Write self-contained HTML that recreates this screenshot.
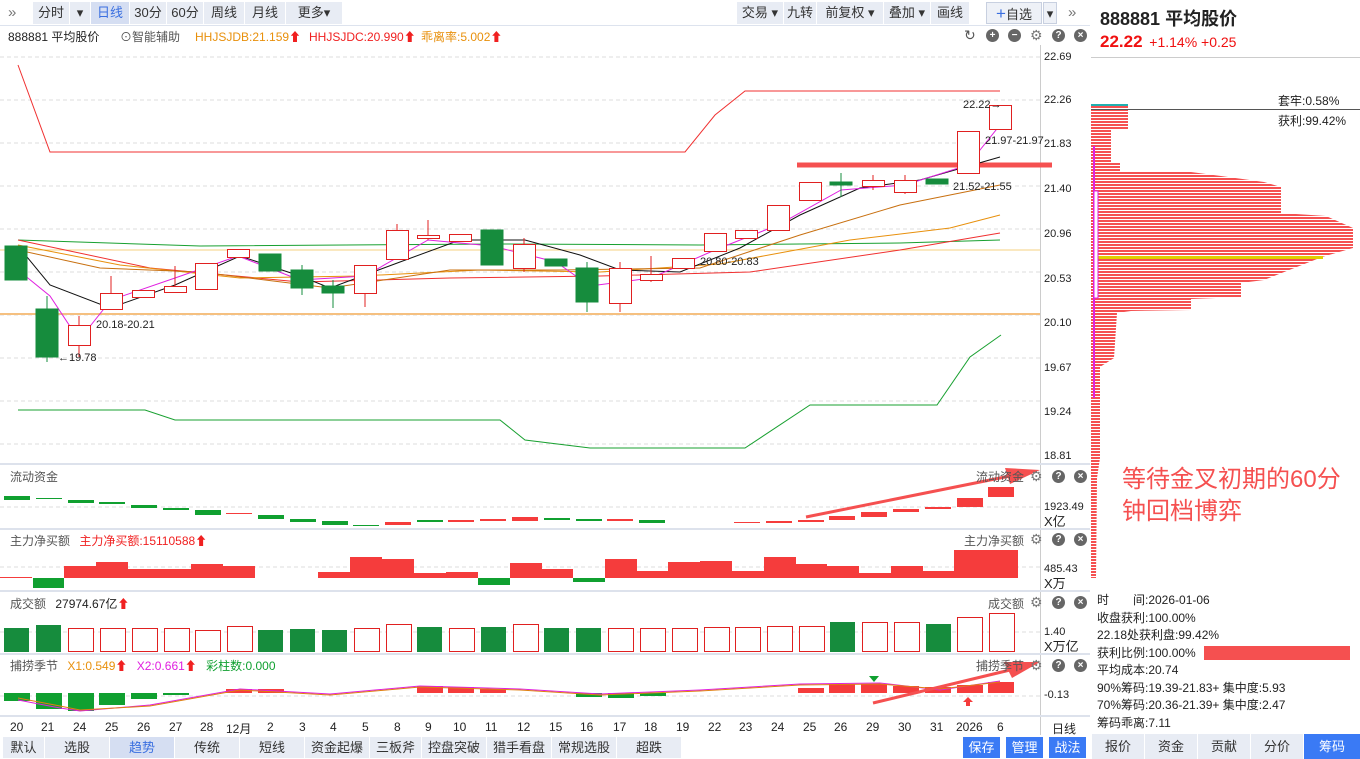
<!DOCTYPE html>
<html><head><meta charset="utf-8"><style>
*{margin:0;padding:0;box-sizing:border-box}
body{width:1360px;height:759px;overflow:hidden;background:#fff;font-family:"Liberation Sans","Noto Sans CJK SC",sans-serif;font-size:12px;color:#333;position:relative}
.a{position:absolute;white-space:nowrap}
.btn{position:absolute;top:2px;height:22px;background:#e8ecf4;line-height:22px;text-align:center;font-size:13px;color:#333}
.tab{position:absolute;top:737px;height:21px;background:#e8ecf4;line-height:21px;text-align:center;font-size:13px;color:#333}
.ic{position:absolute;width:13px;height:13px;border-radius:50%;background:#666;color:#fff;font-size:10px;line-height:13px;text-align:center;font-weight:bold}
.gear{position:absolute;color:#777;font-size:14px;line-height:13px}
</style></head><body>
<div class="a" style="left:8px;top:4px;font-size:15px;color:#777">»</div>
<div class="btn" style="left:33px;width:36px">分时</div>
<div class="btn" style="left:70px;width:20px">▾</div>
<div class="btn" style="left:91px;width:38px;background:#d5def2;color:#3a6fe0">日线</div>
<div class="btn" style="left:130px;width:36px">30分</div>
<div class="btn" style="left:167px;width:36px">60分</div>
<div class="btn" style="left:204px;width:40px">周线</div>
<div class="btn" style="left:245px;width:40px">月线</div>
<div class="btn" style="left:286px;width:56px">更多▾</div>
<div class="btn" style="left:737px;width:46px">交易 ▾</div>
<div class="btn" style="left:784px;width:32px">九转</div>
<div class="btn" style="left:817px;width:66px">前复权 ▾</div>
<div class="btn" style="left:884px;width:46px">叠加 ▾</div>
<div class="btn" style="left:931px;width:38px">画线</div>
<div class="btn" style="left:986px;width:56px;border:1px solid #c8d0e0;background:#eef1f7"><span style="color:#3a6fe0;font-size:17px">+</span>自选</div>
<div class="btn" style="left:1043px;width:14px;border:1px solid #c8d0e0;background:#eef1f7">▾</div>
<div class="a" style="left:1068px;top:4px;font-size:15px;color:#777">»</div>
<div class="a" style="left:0;top:25px;width:1090px;height:1px;background:#dde3ee"></div>
<div class="a" style="left:8px;top:28px;font-size:12px;color:#222">888881 平均股价</div>
<div class="a" style="left:120px;top:28px;font-size:12px;color:#555">⊙智能辅助</div>
<div class="a" style="left:195px;top:28px;color:#e8900c">HHJSJDB:21.159<span style="color:#f02020">⬆</span></div>
<div class="a" style="left:309px;top:28px;color:#f02020">HHJSJDC:20.990⬆</div>
<div class="a" style="left:421px;top:28px;color:#e8900c">乖离率:5.002<span style="color:#f02020">⬆</span></div>
<div class="a" style="left:964px;top:27px;font-size:14px;color:#555">↻</div>
<div class="ic" style="left:986px;top:29px">+</div><div class="ic" style="left:1008px;top:29px">−</div>
<div class="gear" style="left:1030px;top:29px">⚙</div>
<div class="ic" style="left:1052px;top:29px">?</div><div class="ic" style="left:1074px;top:29px">×</div>

<svg class="a" style="left:0;top:0" width="1090" height="759">
<g stroke="#ddd" stroke-dasharray="4,3">
<line x1="0" y1="57" x2="1040" y2="57"/><line x1="0" y1="100" x2="1040" y2="100"/><line x1="0" y1="143" x2="1040" y2="143"/><line x1="0" y1="186" x2="1040" y2="186"/><line x1="0" y1="229" x2="1040" y2="229"/><line x1="0" y1="272" x2="1040" y2="272"/><line x1="0" y1="315" x2="1040" y2="315"/><line x1="0" y1="358" x2="1040" y2="358"/><line x1="0" y1="401" x2="1040" y2="401"/><line x1="0" y1="444" x2="1040" y2="444"/>
<line x1="0" y1="507" x2="1040" y2="507"/><line x1="0" y1="567" x2="1040" y2="567"/><line x1="0" y1="632" x2="1040" y2="632"/><line x1="0" y1="696" x2="1040" y2="696"/>
</g>
<line x1="1040.5" y1="45" x2="1040.5" y2="735" stroke="#ccc"/>
<g stroke="#dde2ec" stroke-width="2"><line x1="0" y1="464" x2="1090" y2="464"/><line x1="0" y1="529" x2="1090" y2="529"/><line x1="0" y1="591" x2="1090" y2="591"/><line x1="0" y1="654" x2="1090" y2="654"/><line x1="0" y1="716" x2="1090" y2="716"/></g>
<line x1="1090.5" y1="0" x2="1090.5" y2="759" stroke="#c8d0de"/>
<polyline fill="none" stroke="#f03030" points="18,65 50,152 685,152 715,115 745,91 1000,91"/>
<polyline fill="none" stroke="#18a030" points="18,410 145,410 175,420 500,420 525,440 590,448 745,448 810,405 937,405 970,357 1001,335"/>
<line x1="0" y1="314" x2="1040" y2="314" stroke="#f5c080" stroke-width="2"/>
<line x1="0" y1="250" x2="1040" y2="250" stroke="#f5d080"/>
<line x1="797" y1="165" x2="1052" y2="165" stroke="#f55050" stroke-width="5"/>
<polyline fill="none" stroke="#18a030" points="18,240 200,246 500,244 700,245 900,243 1000,240"/>
<polyline fill="none" stroke="#f03030" points="18,240 150,268 300,282 450,278 600,276 750,272 900,250 1000,233"/>
<polyline fill="none" stroke="#e8900c" points="18,245 120,265 240,278 360,276 480,270 600,272 720,264 850,240 950,228 1000,215"/>
<polyline fill="none" stroke="#c87010" points="18,250 100,268 200,272 330,288 450,270 560,270 700,268 800,235 900,205 1000,185"/>
<polyline fill="none" stroke="#111" points="18,246 50,285 110,308 175,285 240,256 300,276 330,288 400,262 460,240 525,240 580,255 620,270 680,272 740,248 800,215 860,188 920,180 1000,157"/>
<polyline fill="none" stroke="#e020e0" points="18,270 50,296 79,340 111,300 175,278 238,256 300,280 365,276 428,240 492,246 556,262 590,286 651,278 715,250 778,225 841,190 905,185 968,165 1000,125"/>
<g stroke="#e02020" fill="#fff">
<line x1="79" y1="316" x2="79" y2="357"/><rect x="68.5" y="325.5" width="22" height="20"/>
<line x1="111" y1="276" x2="111" y2="310"/><rect x="100.5" y="293.5" width="22" height="16"/>
<rect x="132.5" y="290.5" width="22" height="7"/>
<line x1="175" y1="266" x2="175" y2="292"/><rect x="164.5" y="286.5" width="22" height="6"/>
<rect x="195.5" y="263.5" width="22" height="26"/>
<rect x="227.5" y="249.5" width="22" height="8"/>
<line x1="365" y1="265" x2="365" y2="307"/><rect x="354.5" y="265.5" width="22" height="28"/>
<line x1="397" y1="224" x2="397" y2="260"/><rect x="386.5" y="230.5" width="22" height="29"/>
<line x1="428" y1="220" x2="428" y2="240"/><rect x="417.5" y="235.5" width="22" height="3"/>
<rect x="449.5" y="234.5" width="22" height="7"/>
<line x1="524" y1="238" x2="524" y2="272"/><rect x="513.5" y="244.5" width="22" height="24"/>
<line x1="620" y1="262" x2="620" y2="312"/><rect x="609.5" y="268.5" width="22" height="35"/>
<line x1="651" y1="256" x2="651" y2="282"/><rect x="640.5" y="274.5" width="22" height="6"/>
<rect x="672.5" y="258.5" width="22" height="10"/>
<rect x="704.5" y="233.5" width="22" height="18"/>
<rect x="735.5" y="230.5" width="22" height="8"/>
<rect x="767.5" y="205.5" width="22" height="25"/>
<rect x="799.5" y="182.5" width="22" height="18"/>
<line x1="873" y1="175" x2="873" y2="190"/><rect x="862.5" y="180.5" width="22" height="6"/>
<line x1="905" y1="175" x2="905" y2="194"/><rect x="894.5" y="180.5" width="22" height="12"/>
<rect x="957.5" y="131.5" width="22" height="42"/>
<rect x="989.5" y="105.5" width="22" height="24"/>
</g>
<g fill="#168c3d" stroke="#168c3d">
<rect x="5" y="246" width="22" height="34"/>
<line x1="47" y1="296" x2="47" y2="362"/><rect x="36" y="309" width="22" height="48"/>
<rect x="259" y="254" width="22" height="17"/>
<line x1="302" y1="265" x2="302" y2="295"/><rect x="291" y="270" width="22" height="18"/>
<line x1="333" y1="280" x2="333" y2="308"/><rect x="322" y="286" width="22" height="7"/>
<rect x="481" y="230" width="22" height="35"/>
<rect x="545" y="259" width="22" height="7"/>
<line x1="587" y1="262" x2="587" y2="312"/><rect x="576" y="268" width="22" height="34"/>
<line x1="841" y1="173" x2="841" y2="197"/><rect x="830" y="182" width="22" height="3"/>
<rect x="926" y="179" width="22" height="5"/>
</g>
<g font-size="11" fill="#222">
<text x="96" y="328">20.18-20.21</text><text x="58" y="361">←19.78</text>
<text x="700" y="265">20.80-20.83</text><text x="953" y="190">21.52-21.55</text>
<text x="985" y="144">21.97-21.97</text><text x="963" y="108">22.22→</text>
</g>
<g fill="#10a030">
<rect x="4" y="496" width="26" height="4"/><rect x="36" y="498" width="26" height="1"/><rect x="68" y="500" width="26" height="3"/><rect x="99" y="502" width="26" height="2"/><rect x="131" y="505" width="26" height="3"/><rect x="163" y="508" width="26" height="2"/><rect x="195" y="510" width="26" height="5"/><rect x="258" y="515" width="26" height="4"/><rect x="290" y="519" width="26" height="3"/><rect x="322" y="521" width="26" height="4"/><rect x="353" y="525" width="26" height="1"/><rect x="417" y="520" width="26" height="2"/><rect x="544" y="518" width="26" height="2"/><rect x="639" y="520" width="26" height="3"/><rect x="576" y="519" width="26" height="2"/>
</g>
<g fill="#f53c3c">
<rect x="226" y="513" width="26" height="1"/><rect x="385" y="522" width="26" height="3"/><rect x="448" y="520" width="26" height="2"/><rect x="480" y="519" width="26" height="2"/><rect x="512" y="517" width="26" height="4"/><rect x="607" y="519" width="26" height="2"/><rect x="734" y="522" width="26" height="1"/><rect x="766" y="521" width="26" height="2"/><rect x="798" y="520" width="26" height="2"/><rect x="829" y="516" width="26" height="4"/><rect x="861" y="512" width="26" height="5"/><rect x="893" y="509" width="26" height="3"/><rect x="925" y="507" width="26" height="2"/><rect x="957" y="498" width="26" height="9"/><rect x="988" y="487" width="26" height="10"/>
</g>
<g fill="#f53c3c">
<rect x="0" y="577" width="32" height="1"/><rect x="64" y="566" width="32" height="12"/><rect x="96" y="562" width="32" height="16"/><rect x="128" y="569" width="32" height="9"/><rect x="160" y="569" width="32" height="9"/><rect x="191" y="564" width="32" height="14"/><rect x="223" y="566" width="32" height="12"/><rect x="318" y="572" width="32" height="6"/><rect x="350" y="557" width="32" height="21"/><rect x="382" y="559" width="32" height="19"/><rect x="414" y="573" width="32" height="5"/><rect x="446" y="572" width="32" height="6"/><rect x="510" y="563" width="32" height="15"/><rect x="541" y="569" width="32" height="9"/><rect x="605" y="559" width="32" height="19"/><rect x="636" y="571" width="32" height="7"/><rect x="668" y="562" width="32" height="16"/><rect x="700" y="561" width="32" height="17"/><rect x="732" y="571" width="32" height="7"/><rect x="764" y="557" width="32" height="21"/><rect x="795" y="564" width="32" height="14"/><rect x="827" y="566" width="32" height="12"/><rect x="859" y="573" width="32" height="5"/><rect x="891" y="566" width="32" height="12"/><rect x="923" y="571" width="32" height="7"/><rect x="954" y="550" width="64" height="28"/>
</g>
<g fill="#10a030"><rect x="33" y="578" width="31" height="10"/><rect x="478" y="578" width="32" height="7"/><rect x="573" y="578" width="32" height="4"/></g>
<g fill="#fff" stroke="#e02020">
<rect x="68.5" y="628.5" width="25" height="23"/><rect x="100.5" y="628.5" width="25" height="23"/><rect x="132.5" y="628.5" width="25" height="23"/><rect x="164.5" y="628.5" width="25" height="23"/><rect x="195.5" y="630.5" width="25" height="21"/><rect x="227.5" y="626.5" width="25" height="25"/><rect x="354.5" y="628.5" width="25" height="23"/><rect x="386.5" y="624.5" width="25" height="27"/><rect x="449.5" y="628.5" width="25" height="23"/><rect x="513.5" y="624.5" width="25" height="27"/><rect x="608.5" y="628.5" width="25" height="23"/><rect x="640.5" y="628.5" width="25" height="23"/><rect x="672.5" y="628.5" width="25" height="23"/><rect x="704.5" y="627.5" width="25" height="24"/><rect x="735.5" y="627.5" width="25" height="24"/><rect x="767.5" y="626.5" width="25" height="25"/><rect x="799.5" y="626.5" width="25" height="25"/><rect x="862.5" y="622.5" width="25" height="29"/><rect x="894.5" y="622.5" width="25" height="29"/><rect x="957.5" y="617.5" width="25" height="34"/><rect x="989.5" y="613.5" width="25" height="38"/>
</g>
<g fill="#168c3d">
<rect x="4" y="628" width="25" height="24"/><rect x="36" y="625" width="25" height="27"/><rect x="258" y="630" width="25" height="22"/><rect x="290" y="629" width="25" height="23"/><rect x="322" y="630" width="25" height="22"/><rect x="417" y="627" width="25" height="25"/><rect x="481" y="627" width="25" height="25"/><rect x="544" y="628" width="25" height="24"/><rect x="576" y="628" width="25" height="24"/><rect x="830" y="622" width="25" height="30"/><rect x="926" y="624" width="25" height="28"/>
</g>
<g fill="#10a030"><rect x="4" y="693" width="26" height="8"/><rect x="36" y="693" width="26" height="16"/><rect x="68" y="693" width="26" height="18"/><rect x="99" y="693" width="26" height="12"/><rect x="131" y="693" width="26" height="6"/><rect x="163" y="693" width="26" height="2"/><rect x="608" y="693" width="26" height="5"/><rect x="576" y="693" width="26" height="4"/><rect x="640" y="693" width="26" height="3"/></g>
<g fill="#f53c3c"><rect x="226" y="689" width="26" height="4"/><rect x="258" y="689" width="26" height="4"/><rect x="417" y="686" width="26" height="7"/><rect x="448" y="687" width="26" height="6"/><rect x="480" y="689" width="26" height="4"/><rect x="798" y="688" width="26" height="5"/><rect x="829" y="684" width="26" height="9"/><rect x="861" y="684" width="26" height="9"/><rect x="893" y="686" width="26" height="7"/><rect x="925" y="687" width="26" height="6"/><rect x="957" y="685" width="26" height="8"/><rect x="988" y="682" width="26" height="11"/></g>
<polyline fill="none" stroke="#e020e0" points="18,700 60,708 80,711 150,705 240,689 330,694 420,686 520,689 600,694 700,690 800,684 880,683 940,690 1000,681"/>
<polyline fill="none" stroke="#e08010" points="18,698 60,706 80,710 150,706 240,690 330,695 420,687 520,690 600,695 700,691 800,685 880,684 940,689 1000,682"/>
<path d="M869,676h10l-5,6z" fill="#10a030"/><path d="M968,697l-5,5h3v4h4v-4h3z" fill="#f53c3c"/>
<line x1="806" y1="517" x2="1010" y2="476" stroke="#f55050" stroke-width="3"/><path d="M1040,470 L1005,468 L1010,484z" fill="#f55050"/>
<line x1="873" y1="703" x2="1010" y2="670" stroke="#f55050" stroke-width="3"/><path d="M1040,662 L1004,662 L1012,678z" fill="#f55050"/>
</svg>
<div style="position:absolute;left:1044px;top:0;font-size:11px;color:#222">
<div class="a" style="top:51px">22.69</div><div class="a" style="top:94px">22.26</div><div class="a" style="top:138px">21.83</div><div class="a" style="top:183px">21.40</div><div class="a" style="top:228px">20.96</div><div class="a" style="top:273px">20.53</div><div class="a" style="top:317px">20.10</div><div class="a" style="top:362px">19.67</div><div class="a" style="top:406px">19.24</div><div class="a" style="top:450px">18.81</div>
<div class="a" style="top:501px">1923.49</div><div class="a" style="top:511px;font-size:13px">X亿</div>
<div class="a" style="top:563px">485.43</div><div class="a" style="top:573px;font-size:13px">X万</div>
<div class="a" style="top:626px">1.40</div><div class="a" style="top:636px;font-size:13px">X万亿</div>
<div class="a" style="top:689px">-0.13</div>
</div>
<div class="a" style="left:10px;top:468px;color:#555">流动资金</div>
<div class="a" style="left:10px;top:532px;color:#555">主力净买额 <span style="color:#f02020;margin-left:6px">主力净买额:15110588⬆</span></div>
<div class="a" style="left:10px;top:595px;color:#555">成交额 <span style="color:#222;margin-left:6px">27974.67亿<span style="color:#f02020">⬆</span></span></div>
<div class="a" style="left:10px;top:657px;color:#555">捕捞季节 <span style="color:#e8900c;margin-left:6px">X1:0.549<span style="color:#f02020">⬆</span></span> <span style="color:#e020e0;margin-left:6px">X2:0.661<span style="color:#f02020">⬆</span></span> <span style="color:#10a030;margin-left:6px">彩柱数:0.000</span></div>
<div class="a" style="left:976px;top:468px;color:#555">流动资金</div><div class="a" style="left:964px;top:532px;color:#555">主力净买额</div><div class="a" style="left:988px;top:595px;color:#555">成交额</div><div class="a" style="left:976px;top:657px;color:#555">捕捞季节</div>
<div class="gear" style="left:1030px;top:470px">⚙</div><div class="ic" style="left:1052px;top:470px">?</div><div class="ic" style="left:1074px;top:470px">×</div>
<div class="gear" style="left:1030px;top:533px">⚙</div><div class="ic" style="left:1052px;top:533px">?</div><div class="ic" style="left:1074px;top:533px">×</div>
<div class="gear" style="left:1030px;top:596px">⚙</div><div class="ic" style="left:1052px;top:596px">?</div><div class="ic" style="left:1074px;top:596px">×</div>
<div class="gear" style="left:1030px;top:659px">⚙</div><div class="ic" style="left:1052px;top:659px">?</div><div class="ic" style="left:1074px;top:659px">×</div>
<div style="position:absolute;top:720px;left:0;font-size:12px;color:#222">
<span class="a" style="left:10px">20</span><span class="a" style="left:41px">21</span><span class="a" style="left:73px">24</span><span class="a" style="left:105px">25</span><span class="a" style="left:137px">26</span><span class="a" style="left:169px">27</span><span class="a" style="left:200px">28</span><span class="a" style="left:226px">12月</span><span class="a" style="left:267px">2</span><span class="a" style="left:299px">3</span><span class="a" style="left:330px">4</span><span class="a" style="left:362px">5</span><span class="a" style="left:394px">8</span><span class="a" style="left:425px">9</span><span class="a" style="left:453px">10</span><span class="a" style="left:485px">11</span><span class="a" style="left:517px">12</span><span class="a" style="left:549px">15</span><span class="a" style="left:580px">16</span><span class="a" style="left:613px">17</span><span class="a" style="left:644px">18</span><span class="a" style="left:676px">19</span><span class="a" style="left:708px">22</span><span class="a" style="left:739px">23</span><span class="a" style="left:771px">24</span><span class="a" style="left:803px">25</span><span class="a" style="left:834px">26</span><span class="a" style="left:866px">29</span><span class="a" style="left:898px">30</span><span class="a" style="left:930px">31</span><span class="a" style="left:956px">2026</span><span class="a" style="left:997px">6</span><span class="a" style="left:1052px">日线</span>
</div>
<div class="tab" style="left:3px;width:41px">默认</div><div class="tab" style="left:45px;width:64px">选股</div><div class="tab" style="left:110px;width:64px;background:#d5def2;color:#3a6fe0">趋势</div><div class="tab" style="left:175px;width:64px">传统</div><div class="tab" style="left:240px;width:64px">短线</div><div class="tab" style="left:305px;width:64px">资金起爆</div><div class="tab" style="left:370px;width:51px">三板斧</div><div class="tab" style="left:422px;width:64px">控盘突破</div><div class="tab" style="left:487px;width:64px">猎手看盘</div><div class="tab" style="left:552px;width:64px">常规选股</div><div class="tab" style="left:617px;width:64px">超跌</div>
<div class="tab" style="left:963px;width:37px;background:#3a7af5;color:#fff">保存</div><div class="tab" style="left:1006px;width:37px;background:#3a7af5;color:#fff">管理</div><div class="tab" style="left:1049px;width:37px;background:#3a7af5;color:#fff">战法</div>
<div class="a" style="left:1100px;top:5px;font-size:18px;font-weight:bold;color:#222">888881 平均股价</div>
<div class="a" style="left:1100px;top:32px;font-size:17px;font-weight:bold;color:#f01010">22.22 <span style="font-size:14px;font-weight:normal;margin-left:2px">+1.14% +0.25</span></div>
<div class="a" style="left:1091px;top:57px;width:269px;height:1px;background:#ccc"></div>
<svg class="a" style="left:1091px;top:58px" width="269" height="530">
<defs><pattern id="st" width="4" height="3" patternUnits="userSpaceOnUse"><rect width="4" height="2" fill="#f55050"/></pattern></defs>
<polygon fill="url(#st)" points="0,46 37,46 37,72 20,72 20,104 29,104 29,114 100,114 130,118 173,124 190,129 190,155 235,158 262,170 262,190 231,199 216,205 173,222 150,225 150,239 100,241 100,252 40,253 26,255 23,300 9,309 9,400 6,420 5,520 0,520"/>
<rect x="0" y="46" width="37" height="2" fill="#20b0b0"/>
<line x1="0" y1="51.5" x2="269" y2="51.5" stroke="#555"/>
<rect x="5" y="198" width="227" height="3" fill="#e0d000"/>
<line x1="3" y1="88" x2="3" y2="340" stroke="#e020e0" stroke-width="2"/>
<rect x="3" y="133" width="4" height="107" fill="#fff" stroke="#e020e0" stroke-width="1"/>
</svg>
<div class="a" style="left:1278px;top:92px;font-size:12px;color:#222">套牢:0.58%</div>
<div class="a" style="left:1278px;top:112px;font-size:12px;color:#222">获利:99.42%</div>
<div class="a" style="left:1122px;top:464px;color:#f55050;font-size:24px;line-height:32px">等待金叉初期的60分<br>钟回档博弈</div>
<div style="position:absolute;left:1097px;top:592px;font-size:12px;color:#222;line-height:17.5px">
时　　间:2026-01-06<br>收盘获利:100.00%<br>22.18处获利盘:99.42%<br>获利比例:100.00% <span style="display:inline-block;width:146px;height:14px;background:#f55050;vertical-align:middle;margin-left:5px"></span><br>平均成本:20.74<br>90%筹码:19.39-21.83+ 集中度:5.93<br>70%筹码:20.36-21.39+ 集中度:2.47<br>筹码乖离:7.11
</div>
<div class="tab" style="left:1092px;width:52px;top:734px;height:25px;line-height:25px">报价</div><div class="tab" style="left:1145px;width:52px;top:734px;height:25px;line-height:25px">资金</div><div class="tab" style="left:1198px;width:52px;top:734px;height:25px;line-height:25px">贡献</div><div class="tab" style="left:1251px;width:52px;top:734px;height:25px;line-height:25px">分价</div><div class="tab" style="left:1304px;width:56px;top:734px;height:25px;line-height:25px;background:#3a7af5;color:#fff">筹码</div>
</body></html>
